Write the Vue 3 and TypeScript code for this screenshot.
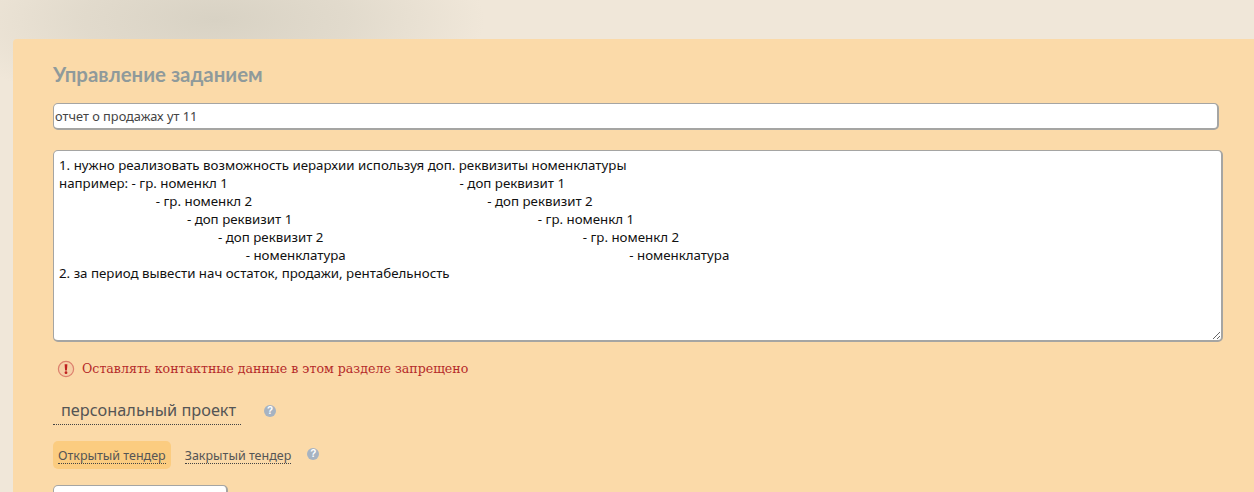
<script setup lang="ts">
import { ref } from "vue";

const title = ref("отчет о продажах ут 11");
const body = ref(
  "1. нужно реализовать возможность иерархии используя доп. реквизиты номенклатуры\n" +
    "например: - гр. номенкл 1" + " ".repeat(67) + "- доп реквизит 1\n" +
    " ".repeat(28) + "- гр. номенкл 2" + " ".repeat(68) + "- доп реквизит 2\n" +
    " ".repeat(37) + "- доп реквизит 1" + " ".repeat(71) + "- гр. номенкл 1\n" +
    " ".repeat(46) + "- доп реквизит 2" + " ".repeat(75) + "- гр. номенкл 2\n" +
    " ".repeat(54) + "- номенклатура" + " ".repeat(82) + "- номенклатура\n" +
    "2. за период вывести нач остаток, продажи, рентабельность"
);
</script>

<template>
  <div class="page">
    <section class="panel">
      <h2 class="heading">Управление заданием</h2>
      <input v-model="title" class="title-input" type="text" />
      <textarea v-model="body" class="body-input" spellcheck="false"></textarea>

      <p class="warning">
        <svg class="warn-icon" width="18" height="18" viewBox="0 0 18 18" aria-hidden="true">
          <circle cx="9" cy="9" r="7.6" fill="#f6cfa6" stroke="#dc7f6c" stroke-width="1.2" />
          <path d="M7.6 4.2h2.8l-.5 6.3H8.1z" fill="#bf1f1f" />
          <circle cx="9" cy="12.7" r="1.4" fill="#bf1f1f" />
        </svg>
        <span>Оставлять контактные данные в этом разделе запрещено</span>
      </p>

      <div class="project-row">
        <span class="project">персональный проект</span>
        <span class="help">?</span>
      </div>

      <div class="tabs">
        <span class="tab tab-active"><span class="tab-label">Открытый тендер</span></span>
        <span class="tab"><span class="tab-label">Закрытый тендер</span></span>
        <span class="help help-tabs">?</span>
      </div>

      <div class="stub"></div>
    </section>
  </div>
</template>

<style>
html,
body {
  margin: 0;
  overflow: hidden;
}
</style>

<style scoped>
.page {
  width: 1254px;
  height: 492px;
  overflow: hidden;
  box-sizing: border-box;
  padding: 39px 0 0 13px;
  background:
    radial-gradient(ellipse 270px 95px at 215px 20px, #d8d2c4 0%, rgba(216, 210, 196, 0.6) 50%, rgba(216, 210, 196, 0) 100%),
    #f0e7d9;
}
.panel {
  box-sizing: border-box;
  height: 600px;
  padding: 24px 0 0 40px;
  background: #fbdaa9;
  border-radius: 4px 0 0 0;
}
.heading {
  margin: 0 0 17px;
  height: 23px;
  font: 700 20.4px/23px Lato, sans-serif;
  color: #8f9a9b;
}
.title-input {
  display: block;
  box-sizing: border-box;
  width: 1166px;
  height: 27px;
  padding: 0 0 0 1px;
  margin: 0 0 20px;
  border: 2px solid #a5a5a3;
  border-width: 1px 2px 2px 1px;
  border-radius: 5px;
  background: #fff;
  font: 12.8px "Noto Sans", sans-serif;
  color: #444;
  outline: none;
}
.body-input {
  display: block;
  box-sizing: border-box;
  width: 1170px;
  height: 192px;
  padding: 5px 5px;
  margin: 0 0 16px;
  border: 2px solid #a5a5a3;
  border-width: 1px 2px 2px 1px;
  border-radius: 5px;
  background: #fff;
  font: 13.3px/18px "Noto Sans", sans-serif;
  color: #111;
  outline: none;
  resize: both;
  white-space: pre;
  overflow: hidden;
}
.warning {
  display: flex;
  align-items: center;
  gap: 7px;
  height: 22px;
  margin: 0 0 19px 4px;
  font: 12.6px/22px "DejaVu Serif", serif;
  color: #b52a2a;
}
.warn-icon {
  flex: none;
}
.project-row {
  display: flex;
  align-items: center;
  height: 26px;
  margin: 0 0 16px;
}
.project {
  box-sizing: border-box;
  width: 188px;
  height: 26px;
  padding-left: 8px;
  font: 16.3px/22px "Noto Sans", sans-serif;
  color: #555;
  border-bottom: 1px dotted #444;
}
.help {
  display: inline-block;
  width: 12px;
  height: 12px;
  margin-left: 23px;
  margin-top: -2px;
  border-radius: 50%;
  background: #a6b3c2;
  color: #fff;
  font: 700 10px/12px "Liberation Sans", sans-serif;
  text-align: center;
}
.tabs {
  display: flex;
  align-items: center;
  height: 28px;
  margin: 0 0 16px;
  gap: 14px;
}
.tab {
  display: flex;
  align-items: center;
  height: 28px;
  font: 12.5px "Noto Sans", sans-serif;
  color: #555;
}
.tab-active {
  padding: 0 5px;
  background: #fbcc80;
  border-radius: 5px;
}
.tab-label {
  border-bottom: 1px dotted #444;
  line-height: 14px;
  padding-top: 2px;
}
.help-tabs {
  margin-left: 2px;
  margin-top: -2px;
}
.stub {
  box-sizing: border-box;
  width: 175px;
  height: 40px;
  background: #fff;
  border: 2px solid #a5a5a3;
  border-width: 1px 2px 2px 1px;
  border-radius: 5px;
}
</style>
